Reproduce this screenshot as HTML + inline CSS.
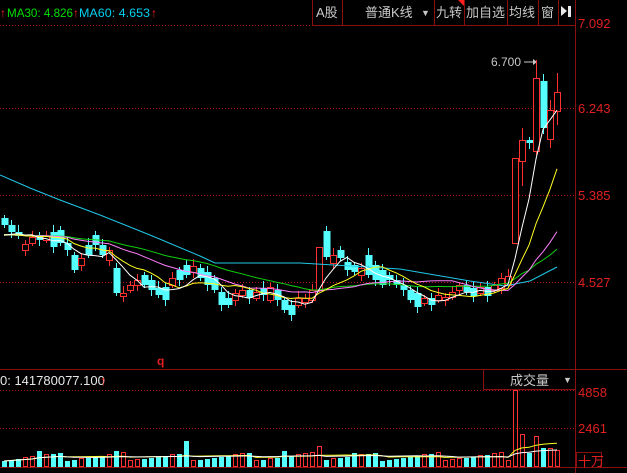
<!DOCTYPE html>
<html><head><meta charset="utf-8"><style>
html,body{margin:0;padding:0;background:#000;width:627px;height:473px;overflow:hidden}
svg{display:block}
text{font-family:"Liberation Sans","Noto Sans CJK SC",sans-serif}
</style></head><body>
<svg id="s" width="627" height="473" xmlns="http://www.w3.org/2000/svg">
<rect width="627" height="473" fill="#000"/>
<g stroke="#b01010" stroke-dasharray="1,2" stroke-width="1">
<line x1="0" y1="25.5" x2="312" y2="25.5"/>
<line x1="0" y1="108.5" x2="575" y2="108.5"/>
<line x1="0" y1="195.5" x2="575" y2="195.5"/>
<line x1="0" y1="282.5" x2="575" y2="282.5"/>
<line x1="0" y1="390.5" x2="575" y2="390.5"/>
<line x1="0" y1="428.5" x2="575" y2="428.5"/>
</g>
<g stroke="#8a1010" stroke-width="1" fill="none">
<line x1="575.5" y1="0" x2="575.5" y2="473"/>
<line x1="0" y1="369.5" x2="627" y2="369.5"/>
<line x1="0" y1="467.5" x2="627" y2="467.5"/>
<rect x="483.5" y="369.5" width="92" height="20"/>
<rect x="576.5" y="452.5" width="25" height="15"/>
<line x1="312.5" y1="0" x2="312.5" y2="25"/>
<line x1="342.5" y1="0" x2="342.5" y2="25"/>
<line x1="434.5" y1="0" x2="434.5" y2="25"/>
<line x1="464.5" y1="0" x2="464.5" y2="25"/>
<line x1="507.5" y1="0" x2="507.5" y2="25"/>
<line x1="538.5" y1="0" x2="538.5" y2="25"/>
<line x1="558.5" y1="0" x2="558.5" y2="25"/>
<line x1="312" y1="25.5" x2="575" y2="25.5"/>
</g>
<polygon points="458,0 464,0 464,6" fill="#ff2020"/>
<text x="0" y="17" font-size="12" fill="#ff2020">↑</text>
<text x="7" y="17" font-size="12" fill="#00e000" textLength="66" lengthAdjust="spacingAndGlyphs">MA30: 4.826</text>
<text x="73" y="17" font-size="12" fill="#ff2020">↑</text>
<text x="79" y="17" font-size="12" fill="#00d0f0" textLength="71" lengthAdjust="spacingAndGlyphs">MA60: 4.653</text>
<text x="151" y="17" font-size="12" fill="#ff2020">↑</text>
<g font-size="13" fill="#c8c8c8">
<text x="316" y="17">A股</text>
<text x="365" y="17">普通K线</text>
<text x="421" y="16" font-size="9">▼</text>
<text x="436" y="17">九转</text>
<text x="466" y="17">加自选</text>
<text x="509" y="17">均线</text>
<text x="541" y="17">窗</text>
</g>
<polygon points="561,6 567,11 561,16" fill="#e8e8e8"/><rect x="568" y="6" width="3" height="11" fill="#e8e8e8"/>
<g font-size="13" fill="#e02020">
<text x="578" y="28">7.092</text>
<text x="578" y="113">6.243</text>
<text x="578" y="200">5.385</text>
<text x="578" y="287">4.527</text>
<text x="578" y="397">4858</text>
<text x="578" y="433">2461</text>
<text x="578" y="466">十万</text>
</g>
<text x="157" y="365" font-size="12" fill="#e02020" font-weight="bold">q</text>
<text x="0" y="385" font-size="13" fill="#e8e8e8">0: 141780077.100</text>
<text x="100" y="385" font-size="13" fill="#ff2020">↑</text>
<text x="510" y="385" font-size="13" fill="#c8c8c8">成交量</text>
<text x="563" y="383" font-size="9" fill="#c8c8c8">▼</text>
<text x="491" y="66" font-size="12" fill="#c8c8c8">6.700</text>
<line x1="524" y1="62" x2="533" y2="62" stroke="#c8c8c8"/><polygon points="533,59 537,62 533,65" fill="#c8c8c8"/>
<g id="g"></g>
</svg>
<script>
var C=[[218,225],[225,232],[232,236],[250,244],[243,237],[235,240],[240,236],[232,247],[230,243],[243,250],[255,270],[265,258],[245,255],[235,245],[245,255],[260,250],[268,293],[296,293],[290,285],[285,280],[275,285],[280,290],[288,295],[287,300],[285,278],[270,280],[265,275],[272,266],[268,278],[272,285],[278,290],[292,305],[298,305],[300,293],[295,290],[290,298],[298,292],[288,295],[300,287],[290,300],[300,310],[305,315],[305,298],[302,298],[300,290],[290,247],[231,257],[263,255],[250,258],[262,270],[265,272],[275,268],[255,275],[265,280],[270,285],[275,280],[280,285],[285,290],[290,300],[293,307],[303,298],[298,305],[300,295],[300,297],[297,292],[290,285],[285,292],[288,296],[293,287],[287,296],[290,285],[288,278],[285,276],[243,158],[161,140],[140,143],[151,78],[81,128],[139,110],[111,92]];
var HL={73:[158,243],74:[128,186],76:[60,155],78:[100,148],79:[73,125],45:[247,292],46:[226,260]};
var s="",vol=[];
for(var i=0;i<C.length;i++){var x=4+7*i,o=C[i][0],c=C[i][1],up=c<o;
var t=Math.min(o,c),b=Math.max(o,c);var h=HL[i]||[t-3-(i*7%5),b+3+(i*3%6)];
var col=up?"#ff3030":"#55ffff";
s+='<line x1="'+(x+0.5)+'" y1="'+h[0]+'" x2="'+(x+0.5)+'" y2="'+h[1]+'" stroke="'+col+'"/>';
if(up)s+='<rect x="'+(x-2.5)+'" y="'+(t+0.5)+'" width="6" height="'+Math.max(b-t,1)+'" fill="#000" stroke="'+col+'"/>';
else s+='<rect x="'+(x-2.5)+'" y="'+t+'" width="7" height="'+Math.max(b-t,2)+'" fill="'+col+'"/>';
var v=6+((i*37)%9);if(i==16||i==5||i==40)v=16;if(i==26)v=26;if(i==45)v=20;if(i==50)v=14;
if(i==73)v=76;if(i==74)v=32;if(i==75)v=14;if(i==76)v=30;if(i==77)v=19;if(i==78)v=18;if(i==79)v=16;
vol.push(v);
if(up)s+='<rect x="'+(x-1.5)+'" y="'+(466.5-v)+'" width="4" height="'+v+'" fill="none" stroke="#ff3030"/>';
else s+='<rect x="'+(x-2)+'" y="'+(467-v)+'" width="5" height="'+v+'" fill="#55ffff"/>';}
function ma(arr,n,base){var p=[];for(var i=0;i<arr.length;i++){var k=Math.max(0,i-n+1),sm=0;for(var j=k;j<=i;j++)sm+=arr[j];var a=sm/(i-k+1);p.push((4+7*i)+","+(base-a).toFixed(1));}return p.join(" ");}
var cl=C.map(function(a){return a[1]});
var pre=[232,232,233,234,235,236,237,238,238,238];var cl2=pre.concat(pre).concat(pre).concat(cl);
function maP(n){var p=[];for(var i=30;i<cl2.length;i++){var sm=0;for(var j=i-n+1;j<=i;j++)sm+=cl2[j];p.push((4+7*(i-30))+","+(sm/n).toFixed(1));}return p.join(" ");}
s+='<polyline points="0,175 30,188 60,200 100,215 150,235 200,256 215,263 300,263 400,269 470,281 505,286 530,281 557,267" fill="none" stroke="#20c8e8"/>';
s+='<polyline points="'+maP(30)+'" fill="none" stroke="#10d010"/>';
s+='<polyline points="'+maP(20)+'" fill="none" stroke="#ff80ff"/>';
s+='<polyline points="'+maP(10)+'" fill="none" stroke="#ffff20"/>';
s+='<polyline points="'+maP(5)+'" fill="none" stroke="#ffffff"/>';
s+='<polyline points="'+ma(vol,10,467)+'" fill="none" stroke="#ffff20"/>';
s+='<polyline points="'+ma(vol,20,467)+'" fill="none" stroke="#ffffff"/>';
document.getElementById("g").innerHTML=s;
</script>
</body></html>
